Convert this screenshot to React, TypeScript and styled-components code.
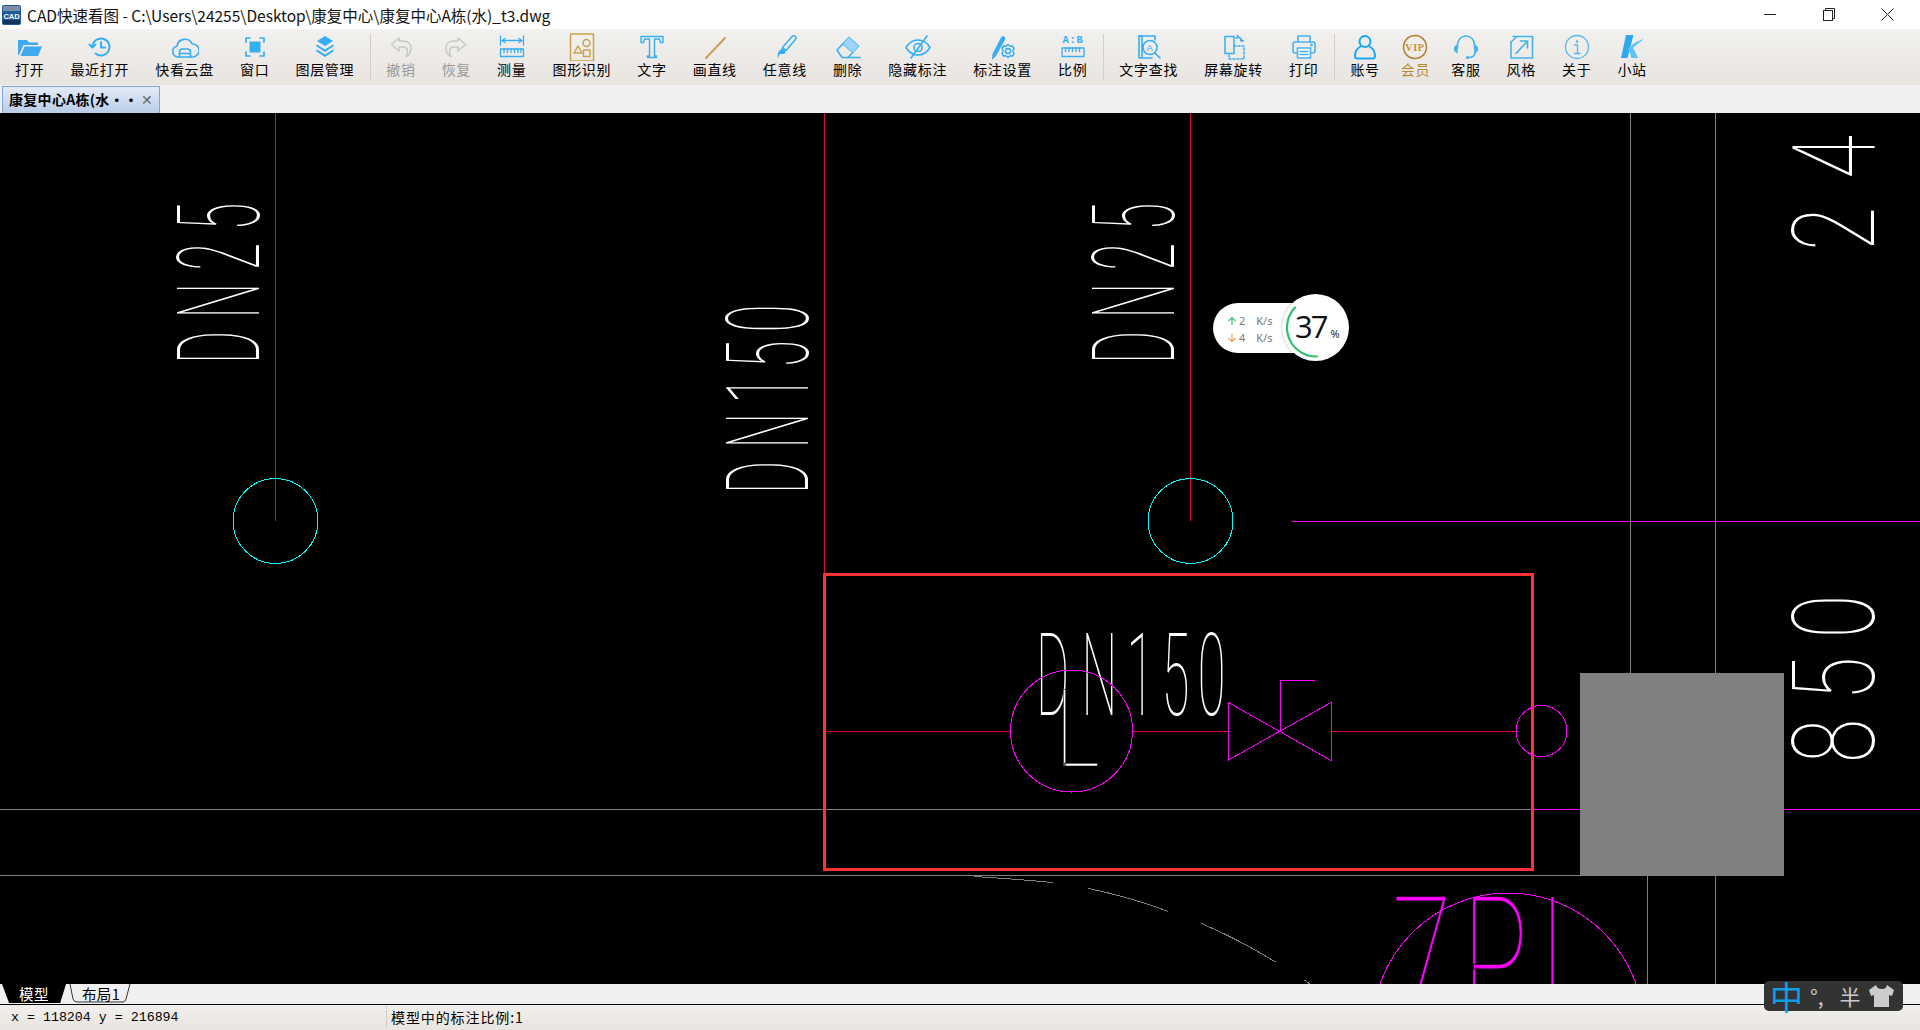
import React from "react"
import styled, { createGlobalStyle } from "styled-components"

const CJK = `"Noto Sans CJK SC", "Noto Sans", sans-serif`
const BLUE = "#35aef5"

const GlobalStyle = createGlobalStyle`
    html, body, #root {
        margin: 0;
        height: 100%;
        overflow: hidden;
    }
    body {
        font-family: ${CJK};
        color: #000;
    }
`

const Frame = styled.div`
    position: relative;
    display: flex;
    flex-direction: column;
    height: 100vh;
    background: #f0f0f0;
`

const TitleBar = styled.div`
    flex: 0 0 29px;
    display: flex;
    align-items: center;
    background: #fff;
    padding-left: 2px;
`

const AppTitle = styled.div`
    margin-left: 6px;
    font-size: 15.5px;
    white-space: nowrap;
    color: #111;
`

const WindowControls = styled.div`
    margin-left: auto;
    padding-right: 3px;
    display: flex;
    align-items: center;
`

const WindowButton = styled.div`
    width: 59px;
    height: 29px;
    display: flex;
    align-items: center;
    justify-content: center;
`

const Toolbar = styled.div`
    flex: 0 0 56px;
    display: flex;
    align-items: stretch;
    padding-left: 2px;
    background: linear-gradient(#f2f1ef, #e8e4e0);
`

const ToolItem = styled.div<{ $tone?: string; $tight?: boolean }>`
    display: flex;
    flex-direction: column;
    align-items: center;
    padding: 4px ${p => (p.$tight ? 8 : 13)}px 0;
    color: ${p => p.$tone || "#000"};
    font-size: 14px;
    letter-spacing: 0.7px;
    line-height: 18px;
    white-space: nowrap;
`

const ToolIcon = styled.div`
    height: 28px;
    width: 28px;
    margin-bottom: -1px;
`

const ToolSeparator = styled.div`
    width: 1px;
    margin: 5px 2.5px;
    background: #d3d0cc;
`

const TabStrip = styled.div`
    flex: 0 0 28px;
    display: flex;
    align-items: flex-end;
    padding-left: 2px;
    background: #f0f0f0;
`

const DocTab = styled.div`
    width: 158px;
    height: 27px;
    box-sizing: border-box;
    display: flex;
    align-items: center;
    justify-content: space-between;
    padding: 0 6px 3px 6px;
    border: 1px solid #7ea6d6;
    border-bottom: none;
    background: linear-gradient(#e4ebf6, #b8cde8);
    font-size: 14px;
    font-weight: 700;
    letter-spacing: 0.3px;
    white-space: nowrap;
`

const TabClose = styled.span`
    color: #666;
    font-size: 14px;
    font-weight: 400;
`

const Stage = styled.div`
    flex: 0 0 871px;
    background: #000;
    overflow: hidden;
    svg {
        display: block;
    }
`

const CadText = styled.text<{ $color?: string; $spacing?: number; $size?: number; $erode?: number }>`
    font-family: Roboto, Inter, sans-serif;
    font-weight: 100;
    font-size: ${p => p.$size || 115}px;
    letter-spacing: ${p => p.$spacing || 0}px;
    fill: ${p => p.$color || "#fff"};
    stroke: ${p => (p.$erode ? "#000" : "none")};
    stroke-width: ${p => p.$erode || 0}px;
`

const SheetBar = styled.div`
    flex: 0 0 20px;
    display: flex;
    padding-left: 2px;
    background: #f0f0f0;
`

const SheetTab = styled.div<{ $active?: boolean }>`
    position: relative;
    width: 64px;
    height: 19px;
    margin-left: ${p => (p.$active ? 0 : 3)}px;
    display: flex;
    align-items: center;
    justify-content: center;
    font-size: 14.500px;
    letter-spacing: 0.4px;
    color: ${p => (p.$active ? "#fff" : "#000")};
    background: ${p => (p.$active ? "#000" : "transparent")};
    clip-path: ${p => (p.$active ? "polygon(0 0, 100% 0, 91% 100%, 11% 100%)" : "none")};
    svg {
        position: absolute;
        inset: 0;
    }
    span {
        position: relative;
    }
`

const StatusBar = styled.div`
    flex: 1;
    display: flex;
    align-items: center;
    border-top: 1px solid #000;
    padding-bottom: 1px;
    background: linear-gradient(#f1efec, #e9e5e0);
`

const Coordinates = styled.div`
    width: 375px;
    padding-left: 11px;
    font-family: "Liberation Mono", monospace;
    font-size: 13.3px;
`

const ScaleNote = styled.div`
    height: 22px;
    line-height: 22px;
    padding-left: 4px;
    border-left: 1px solid #cfcbc6;
    font-size: 14px;
    letter-spacing: 0.9px;
`

const SpeedBadge = styled.div`
    position: absolute;
    left: 1213px;
    top: 303px;
    width: 90px;
    height: 50px;
    box-sizing: border-box;
    padding: 9px 0 0 14px;
    border-radius: 25px 0 0 25px;
    background: #fff;
    font-family: "Noto Sans", sans-serif;
    font-size: 11px;
    line-height: 17px;
    color: #777;
`

const SpeedRow = styled.div`
    display: flex;
    align-items: center;
    gap: 2px;
    span:last-child {
        margin-left: 9px;
    }
`

const LoadDial = styled.div`
    position: absolute;
    left: 1282px;
    top: 294px;
    width: 67px;
    height: 67px;
    border-radius: 50%;
    background: #fff;
    box-shadow: 0 0 2px rgba(0, 0, 0, 0.4);
    svg {
        position: absolute;
        inset: 0;
    }
`

const LoadValue = styled.div`
    position: absolute;
    left: 13px;
    top: 11px;
    display: flex;
    align-items: baseline;
    font-family: "Open Sans", sans-serif;
    font-weight: 400;
    font-size: 31px;
    line-height: 42px;
    letter-spacing: -2px;
    color: #111;
    small {
        margin-left: 4px;
        font-size: 11px;
        letter-spacing: 0;
    }
`

const ImeBar = styled.div`
    position: absolute;
    left: 1764px;
    top: 981px;
    width: 139px;
    height: 30px;
    display: flex;
    align-items: center;
    border-radius: 5px;
    background: #333;
    color: #ccc;
    overflow: visible;
`

const ImeMode = styled.span`
    margin-left: 6px;
    width: 32px;
    text-align: center;
    font-size: 33px;
    line-height: 30px;
    font-weight: 400;
    color: #0c9fe8;
`

const ImeGlyph = styled.span<{ $gap?: number }>`
    margin-left: ${p => p.$gap || 0}px;
    font-size: 21px;
    line-height: 30px;
`

const ImeShirt = styled.svg`
    margin-left: 7px;
`

type IconProps = { children: React.ReactNode; color?: string; width?: number }

const Glyph = ({ children, color = BLUE, width = 1.6 }: IconProps) => (
    <svg width="28" height="28" viewBox="0 0 28 28" fill="none" stroke={color} strokeWidth={width} strokeLinecap="round" strokeLinejoin="round">
        {children}
    </svg>
)

const icons: Record<string, React.ReactNode> = {
    open: (
        <Glyph color="#3fa8ee" width={0}>
            <path fill="#3fa8ee" d="M2 7h9l2 2.500h9v2.500H7.500L3 22H2z" />
            <path fill="#3fa8ee" d="M8.500 13.500H26L22 23H4.500z" />
        </Glyph>
    ),
    recent: (
        <Glyph width={1.9}>
            <path d="M6.500 14a8.500 8.500 0 1 1 3 6.500" />
            <path d="M3.500 11.500l3 3 3-3" />
            <path d="M15 9v5.500h4" />
        </Glyph>
    ),
    cloud: (
        <Glyph>
            <path d="M8 24H6.500a5.500 5.500 0 0 1-.5-10.800 8 8 0 0 1 15.200-2.200 6.500 6.500 0 0 1 .8 13H20" />
            <path d="M8.500 24v-5a3 3 0 0 1 3-3h5a3 3 0 0 1 3 3v5zM8.500 20.500h11" />
        </Glyph>
    ),
    window: (
        <Glyph width={1.7}>
            <path d="M5 9V5h4M19 5h4v4M23 19v4h-4M9 23H5v-4" />
            <rect x="8.500" y="8.500" width="11" height="11" fill={BLUE} stroke="none" />
        </Glyph>
    ),
    layers: (
        <Glyph width={0}>
            <path fill={BLUE} d="M14 3l8 5-8 5-8-5z" />
            <path fill={BLUE} d="M6 11.500l8 5 8-5 1 1.500-9 6-9-6z" />
            <path fill={BLUE} d="M6 16.500l8 5 8-5 1 1.500-9 6-9-6z" />
        </Glyph>
    ),
    undo: (
        <Glyph color="#c9c9c9" width={1.5}>
            <path d="M12 5l-7.500 6.500L12 18v-4h4c3 0 4.500 2 4.500 4.500 0 2-.5 3.500-1.500 5 3.500-1.500 5-5 5-8.500 0-4.500-3.500-7-8-7h-4z" />
        </Glyph>
    ),
    redo: (
        <Glyph color="#c9c9c9" width={1.5}>
            <path d="M16 5l7.500 6.500L16 18v-4h-4c-3 0-4.500 2-4.500 4.500 0 2 .5 3.500 1.500 5-3.500-1.500-5-5-5-8.500 0-4.500 3.500-7 8-7h4z" />
        </Glyph>
    ),
    measure: (
        <Glyph width={1.3}>
            <path d="M2.500 3v9M25.500 3v9M4 7.500h20M7 5.500l-3 2 3 2M21 5.500l3 2-3 2" />
            <rect x="2.500" y="16" width="23" height="7.500" />
            <path d="M6 16v3.500M9.500 16v3.500M13 16v3.500M16.500 16v3.500M20 16v3.500M23 16v3.500" />
        </Glyph>
    ),
    shapes: (
        <Glyph color="#c9a24e" width={1.5}>
            <rect x="2.500" y="1" width="23" height="27" />
            <path d="M6 20l4-7 4 7z" />
            <circle cx="18.500" cy="10" r="3.500" />
            <rect x="15.500" y="17" width="6.500" height="6.500" />
        </Glyph>
    ),
    text: (
        <Glyph width={1.4}>
            <path d="M3 3.500h22v6h-2.500l-1-3.500H16.500v17H18.500v1.500h-9V23h2V6H6.500l-1 3.500H3z" />
        </Glyph>
    ),
    line: (
        <Glyph color="#c8a25a" width={2}>
            <path d="M5 25L24 5" />
        </Glyph>
    ),
    brush: (
        <Glyph width={1.5}>
            <path d="M11.500 14.500L21 3.500c1-1 2.500-1 3.500 0s.5 2.500-.5 3.500l-9 10.500z" />
            <path d="M11 15l4 3-1.500 3H9l-2.500 4.500L7 19.500z" fill={BLUE} stroke="none" />
        </Glyph>
    ),
    eraser: (
        <Glyph width={1.5}>
            <path d="M3 17L15 4.500 24.500 13 14 24.500H8z" />
            <path d="M9 11l10 8.500" />
            <path d="M15 4.500l9.500 8.500-5.500 6.500L9 11z" fill="#9fd6f7" stroke="none" />
            <path d="M14 24.500h12" />
        </Glyph>
    ),
    eye: (
        <Glyph width={1.6}>
            <path d="M2 14.500c3-5 7-7.500 12-7.500s9 2.500 12 7.500c-3 5-7 7.500-12 7.500s-9-2.500-12-7.500z" />
            <circle cx="14" cy="14.500" r="4" />
            <path d="M23 3L7 25" />
        </Glyph>
    ),
    labelSetup: (
        <Glyph width={1.5}>
            <path d="M12 4.500c.8-1.500 2.500-1.500 3.500-.8s1.200 2 .5 3L7 23l-4 4 .5-6z" fill={BLUE} stroke="none" />
            <circle cx="19" cy="18" r="2.500" />
            <path d="M19 11.500l2 1.800 2.500-.3 1.500 2.500-1.200 2.500 1.200 2.500-1.500 2.500-2.500-.3-2 1.800-2-1.800-2.500.3-1.500-2.500 1.200-2.500-1.200-2.500 1.500-2.500 2.500.3z" />
        </Glyph>
    ),
    ratio: (
        <Glyph width={1.3}>
            <text x="14" y="10" textAnchor="middle" fontFamily="Liberation Mono, monospace" fontWeight="700" fontSize="10.500" fill={BLUE} stroke="none">
                A:B
            </text>
            <rect x="3" y="15" width="22" height="8.500" />
            <path d="M6.500 15v3.500M10 15v3.500M13.500 15v3.500M17 15v3.500M20.500 15v3.500" />
        </Glyph>
    ),
    search: (
        <Glyph width={1.6}>
            <path d="M17 25H4V3h16v4" />
            <path d="M4 3h3v22" />
            <circle cx="15" cy="14.500" r="7" />
            <path d="M20 20l5 5" />
            <text x="15" y="18" textAnchor="middle" fontFamily="Liberation Sans, sans-serif" fontSize="9.500" fill={BLUE} stroke="none">
                A
            </text>
        </Glyph>
    ),
    rotate: (
        <Glyph width={1.5}>
            <rect x="5" y="3.500" width="9" height="17" />
            <path d="M14 13h10v13H9v-5" strokeDasharray="2 2" />
            <path d="M18 4c2 .5 3.500 2 4 4M17.500 2.500l.5 2-2 .5M20.500 7.500l1.500 1 1.500-1" />
        </Glyph>
    ),
    print: (
        <Glyph width={1.6} color="#45b3ee">
            <path d="M8 9V3h12v6" />
            <rect x="3" y="9" width="22" height="11" rx="2" />
            <rect x="7.500" y="15" width="13" height="10" fill="#fff" />
            <path d="M10 18.500h8M10 21.500h8" />
            <circle cx="21.500" cy="12" r=".6" />
        </Glyph>
    ),
    account: (
        <Glyph color="#19a8f7" width={2}>
            <circle cx="14" cy="8.500" r="5.500" />
            <path d="M9.500 13.500C6 15.500 4 19 4 23c0 1.500 1 2.500 2.500 2.500h15c1.500 0 2.500-1 2.500-2.500 0-4-2-7.500-5.500-9.500" />
        </Glyph>
    ),
    vip: (
        <Glyph color="#b47f2c" width={1.5}>
            <circle cx="14" cy="14" r="11.500" />
            <text x="14" y="17.500" textAnchor="middle" fontFamily="Liberation Serif, serif" fontWeight="700" fontSize="10" fill="#c6922f" stroke="none">
                VIP
            </text>
        </Glyph>
    ),
    service: (
        <Glyph color="#45b3ee" width={1.6}>
            <path d="M5.500 15v-3.500a8.500 8.500 0 0 1 17 0V15" />
            <path d="M5 12.500C3 13.500 2.500 14.500 2.500 16s.5 2.500 2.500 3.500zM23 12.500c2 1 2.500 2 2.500 3.500s-.5 2.500-2.500 3.500z" fill="#45b3ee" />
            <path d="M23 19.500c0 3-2.500 5-7 5" />
            <circle cx="15.500" cy="24.500" r=".8" />
        </Glyph>
    ),
    style: (
        <Glyph color="#45b3ee" width={1.6}>
            <path d="M6 3.500h19.500V25H4V9" />
            <path d="M4 9l6-5.500" />
            <path d="M9 20.500L20.500 8M13.500 8h7v7" />
        </Glyph>
    ),
    about: (
        <Glyph color="#55b8ea" width={1.3}>
            <circle cx="14" cy="14" r="11.500" />
            <circle cx="14" cy="8.500" r="1.300" fill="#55b8ea" stroke="none" />
            <path d="M11.500 12h3v8.500M11.500 20.500h5.500" />
        </Glyph>
    ),
    site: (
        <Glyph width={0}>
            <path fill="#2fa9ee" d="M8 2h7.500L9.500 25H3z" />
            <path fill="#5cc4f4" d="M10 16C14 11 19 8 26 6c-4 3-8 6-11 9 2 3 3.500 6.500 5 10h-6.500c-.8-3.500-2-6.500-3.500-9z" />
        </Glyph>
    ),
}

type Tool = { label: string; icon: string; tone?: string; tight?: boolean }

const toolGroups: Tool[][] = [
    [
        { label: "打开", icon: "open" },
        { label: "最近打开", icon: "recent" },
        { label: "快看云盘", icon: "cloud" },
        { label: "窗口", icon: "window" },
        { label: "图层管理", icon: "layers" },
    ],
    [
        { label: "撤销", icon: "undo", tone: "#9a9a9a" },
        { label: "恢复", icon: "redo", tone: "#9a9a9a" },
        { label: "测量", icon: "measure" },
        { label: "图形识别", icon: "shapes" },
        { label: "文字", icon: "text" },
        { label: "画直线", icon: "line" },
        { label: "任意线", icon: "brush" },
        { label: "删除", icon: "eraser" },
        { label: "隐藏标注", icon: "eye" },
        { label: "标注设置", icon: "labelSetup" },
        { label: "比例", icon: "ratio" },
    ],
    [
        { label: "文字查找", icon: "search" },
        { label: "屏幕旋转", icon: "rotate" },
        { label: "打印", icon: "print" },
    ],
    [
        { label: "账号", icon: "account" },
        { label: "会员", icon: "vip", tone: "#b98a35", tight: true },
        { label: "客服", icon: "service" },
        { label: "风格", icon: "style" },
        { label: "关于", icon: "about" },
        { label: "小站", icon: "site" },
    ],
]

const GRAY = "#808080"
const PIPE = "#dc0a40"
const MAGENTA = "#ff00ff"
const CYAN = "#00ffff"

const Seg = ({ d, c, w = 1 }: { d: string; c: string; w?: number }) => (
    <path d={d} stroke={c} strokeWidth={w} fill="none" shapeRendering="crispEdges" />
)

// the drawing itself: coordinates are page pixels, the viewBox starts under the tab strip
const Drawing = () => (
    <svg width="1920" height="871" viewBox="0 113 1920 871">
        <Seg d="M0 809.500H1534" c={GRAY} />
        <Seg d="M0 875.500H1580" c={GRAY} />
        <Seg d="M1534 809.500H1580M1784 809.500H1920" c={MAGENTA} />
        <Seg d="M1292 521.500H1920" c={MAGENTA} />
        <Seg d="M1630.500 113V673M1715.500 113V673M1647.500 876V984M1715.500 876V984" c={GRAY} />
        <rect x="1580" y="673" width="204" height="203" fill={GRAY} />

        <Seg d="M275.500 113V521M824.500 113V573M1190.500 113V521" c={PIPE} />
        <Seg d="M824 731.500H1011M1133 731.500H1228M1331 731.500H1516" c={PIPE} />

        <g shapeRendering="crispEdges" fill="none">
            <circle cx="275.500" cy="521" r="42.500" stroke={CYAN} />
            <circle cx="1190.500" cy="521" r="42.500" stroke={CYAN} />
        </g>

        <CadText transform="translate(259 364) rotate(-90) scale(.44 1)" $spacing={28}>DN25</CadText>
        <CadText transform="translate(1174 364) rotate(-90) scale(.44 1)" $spacing={28}>DN25</CadText>
        <CadText transform="translate(807.500 494) rotate(-90) scale(.44 1)" $spacing={28} dx="0 0 -7 -11 -9">DN150</CadText>
        <CadText transform="translate(1874 251) rotate(-90) scale(.7 1)" $spacing={40}>24</CadText>
        <CadText transform="translate(1874 763) rotate(-90) scale(.7 1)" $spacing={26}>850</CadText>
        <CadText transform="translate(1036 714.500) scale(.44 1)" $spacing={28} dx="0 0 -7 -11 -9">DN150</CadText>
        <CadText transform="translate(1055 765.500) scale(.8 1)" $size={108} $erode={0.7}>L</CadText>
        <CadText transform="translate(1392 1022) scale(.62 1)" $size={176} $spacing={17} $color={MAGENTA} $erode={1}>7PI</CadText>

        <rect x="824.500" y="574.500" width="708" height="295" stroke="#ff3333" strokeWidth="3" fill="none" shapeRendering="crispEdges" />

        <g shapeRendering="crispEdges" fill="none" stroke={MAGENTA}>
            <circle cx="1071.500" cy="731" r="61" />
            <circle cx="1541.500" cy="731" r="25.500" />
            <path d="M1228.500 702.500V760L1331 702.500V760.500ZM1280 731V680.500H1315" />
            <circle cx="1508" cy="1028.500" r="135.500" />
        </g>

        <path
            d="M974 876.500Q1015 879 1053 882.500M1088.500 888.500Q1130 897 1168.500 911.500M1201.500 923.500Q1240 940 1275.500 962M1304.500 980L1310 984"
            stroke={GRAY}
            fill="none"
            shapeRendering="crispEdges"
        />
    </svg>
)

const Arrow = ({ up, color }: { up?: boolean; color: string }) => (
    <svg width="10" height="10" viewBox="0 0 10 10" fill="none" stroke={color} strokeWidth="1.2">
        <path d={up ? "M5 9V1.500M1.500 5L5 1.500 8.500 5" : "M5 1v7.500M1.500 5L5 8.500 8.500 5"} />
    </svg>
)

const App = () => (
    <Frame>
        <GlobalStyle />
        <TitleBar>
            <svg width="19" height="20" viewBox="0 0 19 20">
                <rect width="19" height="20" rx="2" fill="#1f5a9c" />
                <rect x="1" y="1" width="17" height="5" fill="#7c8ea3" />
                <rect x="1" y="15" width="17" height="4" fill="#14335a" />
                <text x="9.500" y="13.500" textAnchor="middle" fontFamily="Liberation Sans, sans-serif" fontWeight="700" fontSize="7.500" fill="#fff">
                    CAD
                </text>
            </svg>
            <AppTitle>CAD快速看图 - C:\Users\24255\Desktop\康复中心\康复中心A栋(水)_t3.dwg</AppTitle>
            <WindowControls>
                <WindowButton>
                    <svg width="12" height="12" viewBox="0 0 12 12" stroke="#222" fill="none">
                        <path d="M0 5.500h12" />
                    </svg>
                </WindowButton>
                <WindowButton>
                    <svg width="12" height="14" viewBox="0 0 12 14" stroke="#222" fill="none">
                        <rect x=".5" y="2.500" width="9" height="10" />
                        <path d="M2.500 2.500V.5h9v10H9.500" />
                    </svg>
                </WindowButton>
                <WindowButton>
                    <svg width="13" height="13" viewBox="0 0 13 13" stroke="#222" fill="none">
                        <path d="M.5.5l12 12M12.500.5l-12 12" />
                    </svg>
                </WindowButton>
            </WindowControls>
        </TitleBar>

        <Toolbar>
            {toolGroups.map((group, i) => (
                <React.Fragment key={i}>
                    {i > 0 && <ToolSeparator />}
                    {group.map(tool => (
                        <ToolItem key={tool.label} $tone={tool.tone} $tight={tool.tight}>
                            <ToolIcon>{icons[tool.icon]}</ToolIcon>
                            {tool.label}
                        </ToolItem>
                    ))}
                </React.Fragment>
            ))}
        </Toolbar>

        <TabStrip>
            <DocTab>
                康复中心A栋(水··
                <TabClose>✕</TabClose>
            </DocTab>
        </TabStrip>

        <Stage>
            <Drawing />
        </Stage>

        <SheetBar>
            <SheetTab $active>
                <span>模型</span>
            </SheetTab>
            <SheetTab>
                <svg width="64" height="19" viewBox="0 0 64 19" fill="none" stroke="#333">
                    <path d="M1 0l3 15q1 3 4 3h46q2 0 3-3l4-15" />
                </svg>
                <span>布局1</span>
            </SheetTab>
        </SheetBar>

        <StatusBar>
            <Coordinates>x = 118204 y = 216894</Coordinates>
            <ScaleNote>模型中的标注比例:1</ScaleNote>
        </StatusBar>

        <SpeedBadge>
            <SpeedRow>
                <Arrow up color="#3ec46d" />
                <span>2</span>
                <span>K/s</span>
            </SpeedRow>
            <SpeedRow>
                <Arrow color="#f59a4a" />
                <span>4</span>
                <span>K/s</span>
            </SpeedRow>
        </SpeedBadge>
        <LoadDial>
            <svg width="67" height="67" viewBox="0 0 67 67" fill="none">
                <path d="M13 13.500A29 29 0 0 0 35 62.500" stroke="#2fbf71" strokeWidth="2.200" strokeLinecap="round" />
            </svg>
            <LoadValue>
                37<small>%</small>
            </LoadValue>
        </LoadDial>

        <ImeBar>
            <ImeMode>中</ImeMode>
            <ImeGlyph $gap={8}>°,</ImeGlyph>
            <ImeGlyph $gap={16}>半</ImeGlyph>
            <ImeShirt width="26" height="24" viewBox="0 0 26 24">
                <path fill="#ccc" d="M8 1L1 6l2 6 3-1v12h15V11l3 1 2-6-7-5c-1 3-2 4-5 4S9 4 8 1z" />
            </ImeShirt>
        </ImeBar>
    </Frame>
)

export default App
